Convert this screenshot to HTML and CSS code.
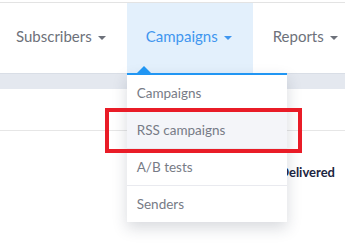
FILE: index.html
```html
<!DOCTYPE html>
<html lang="en">
<head>
  <meta charset="UTF-8">
  <title>Campaigns menu</title>
  <link rel="stylesheet" href="styles.css">
</head>
<body>
  <header class="topbar">
    <nav class="nav">
      <div class="nav-item">Subscribers <span class="caret"></span></div>
      <div class="nav-item active">Campaigns <span class="caret"></span>
        <div class="dropdown">
          <span class="arrow"></span>
          <div class="drop-item">Campaigns</div>
          <div class="drop-item hover">RSS campaigns</div>
          <div class="drop-item">A/B tests</div>
          <div class="drop-item">Senders</div>
        </div>
      </div>
      <div class="nav-item">Reports <span class="caret"></span></div>
    </nav>
  </header>

  <div class="band"></div>

  <div class="content">
    <div class="row"></div>
    <div class="row head">
      <span class="col">Delivered</span>
    </div>
  </div>

  <div class="highlight"></div>
</body>
</html>
```

FILE: styles.css
```css
html, body {
  height: 100%;
}
body {
  margin: 0;
  font-family: Lato, "Open Sans", sans-serif;
  background: #ffffff;
  color: #333;
  overflow: hidden;
}
.topbar {
  margin-top: 2px;
  border-top: 1px solid #e3e3e3;
}
.nav {
  display: flex;
  height: 70px;
}
.nav-item {
  position: relative;
  display: flex;
  align-items: center;
  padding: 0 21px 0 20px;
  padding-bottom: 4px;
  font-size: 15px;
  color: #6d717a;
  white-space: nowrap;
}
.nav-item:first-child {
  padding-left: 16px;
}
.nav-item.active {
  background: #e3f0fc;
  color: #3f96ef;
  padding-left: 19px;
}
.caret {
  display: inline-block;
  margin-left: 6px;
  margin-top: 3px;
  border-left: 4px solid transparent;
  border-right: 4px solid transparent;
  border-top: 4px solid currentColor;
}
.dropdown {
  position: absolute;
  top: 70px;
  left: 0;
  width: 160px;
  background: #fff;
  border-top: 2px solid #2196f3;
  box-shadow: 0 6px 14px rgba(40, 50, 70, 0.18);
  z-index: 5;
}
.arrow {
  position: absolute;
  top: -9px;
  left: 10px;
  border-left: 7px solid transparent;
  border-right: 7px solid transparent;
  border-bottom: 7px solid #2196f3;
}
.drop-item {
  height: 36px;
  line-height: 36px;
  padding-left: 10px;
  font-size: 13.5px;
  color: #777b86;
  border-bottom: 1px solid #e9eaef;
}
.drop-item:last-child {
  border-bottom: none;
}
.drop-item.hover {
  background: #f4f5f9;
}
.band {
  height: 15px;
  background: #e4e8ef;
  border-top: 1px solid #d9dee6;
}
.content {
  background: #fff;
}
.row {
  height: 41px;
  border-bottom: 1px solid #e6e6e6;
}
.row.head {
  display: flex;
  justify-content: flex-end;
  align-items: center;
  height: 82px;
  border-bottom: none;
  padding-right: 10px;
}
.col {
  font-size: 13px;
  font-weight: 700;
  color: #1c2541;
}
.highlight {
  position: absolute;
  left: 105px;
  top: 108px;
  width: 189px;
  height: 37px;
  border: 4px solid #e91c27;
  z-index: 10;
}
```
